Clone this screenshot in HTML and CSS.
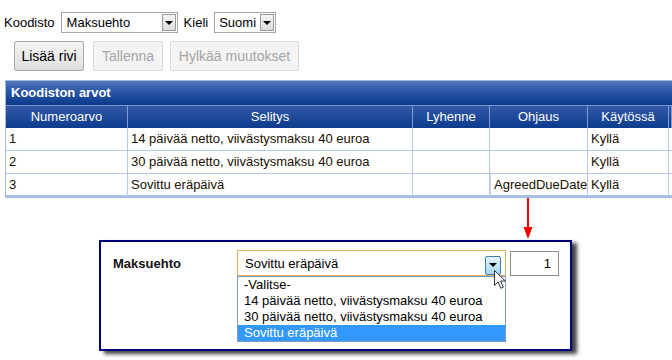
FILE: index.html
```html
<!DOCTYPE html>
<html lang="fi">
<head>
<meta charset="utf-8">
<title>Koodiston arvot</title>
<link rel="stylesheet" href="styles.css">
</head>
<body>
<div class="toolbar">
  <span class="lbl">Koodisto</span>
  <div class="sel sel-koodisto"><span class="sel-text">Maksuehto</span><span class="sel-btn"><i class="tri"></i></span></div>
  <span class="lbl">Kieli</span>
  <div class="sel sel-kieli"><span class="sel-text">Suomi</span><span class="sel-btn"><i class="tri"></i></span></div>
</div>
<div class="actions">
  <button class="btn btn-add">Lisää rivi</button>
  <button class="btn btn-save" disabled>Tallenna</button>
  <button class="btn btn-undo" disabled>Hylkää muutokset</button>
</div>
<div class="grid-panel">
  <div class="panel-title">Koodiston arvot</div>
  <div class="grid">
    <div class="th">Numeroarvo</div>
    <div class="th">Selitys</div>
    <div class="th">Lyhenne</div>
    <div class="th">Ohjaus</div>
    <div class="th">Käytössä</div>
    <div class="th"></div>

    <div class="td">1</div>
    <div class="td">14 päivää netto, viivästysmaksu 40 euroa</div>
    <div class="td"></div>
    <div class="td"></div>
    <div class="td">Kyllä</div>
    <div class="td"></div>

    <div class="td">2</div>
    <div class="td">30 päivää netto, viivästysmaksu 40 euroa</div>
    <div class="td"></div>
    <div class="td"></div>
    <div class="td">Kyllä</div>
    <div class="td"></div>

    <div class="td">3</div>
    <div class="td">Sovittu eräpäivä</div>
    <div class="td"></div>
    <div class="td td-edit">AgreedDueDate</div>
    <div class="td">Kyllä</div>
    <div class="td"></div>
  </div>
</div>
<div class="arrow-row">
  <svg class="arrow" width="10" height="42" viewBox="0 0 10 42">
    <rect x="4" y="0" width="2" height="31" fill="#ff0000"/>
    <polygon points="0.5,29 9.5,29 5,41" fill="#ff0000"/>
  </svg>
</div>
<div class="dialog">
  <span class="dlg-label">Maksuehto</span>
  <div class="combo">
    <span class="combo-text">Sovittu eräpäivä</span>
    <span class="combo-btn"><i class="tri"></i></span>
    <ul class="combo-list">
      <li>-Valitse-</li>
      <li>14 päivää netto, viivästysmaksu 40 euroa</li>
      <li>30 päivää netto, viivästysmaksu 40 euroa</li>
      <li class="selected">Sovittu eräpäivä</li>
    </ul>
    <svg class="cursor" width="14" height="21" viewBox="0 0 14 21">
      <path d="M1.5,1.5 L1.5,16.5 L5,13 L7.8,19.3 L10.3,18.2 L7.6,12 L12.3,12 Z" fill="#fafafa" stroke="#333" stroke-width="1" stroke-linejoin="round"/>
    </svg>
  </div>
  <div class="num-input">1</div>
</div>
</body>
</html>
```

FILE: styles.css
```css
html, body {
  margin: 0;
  padding: 0;
  background: #ffffff;
  overflow: hidden;
}
body {
  font-family: "Liberation Sans", Arial, sans-serif;
  font-size: 13px;
  color: #000;
  width: 672px;
  height: 360px;
}

/* top toolbar */
.toolbar {
  display: flex;
  align-items: center;
  margin-top: 12px;
  padding-left: 4px;
  height: 21px;
}
.lbl { margin-right: 6px; }
.sel {
  box-sizing: border-box;
  height: 21px;
  border: 1px solid #a6a6a6;
  background: #fff;
  display: flex;
  align-items: center;
  margin-right: 6px;
}
.sel-koodisto { width: 117px; }
.sel-kieli { width: 62px; }
.sel-text { padding-left: 5px; flex: 1; white-space: nowrap; }
.sel-kieli .sel-text { padding-left: 4px; }
.sel-btn {
  box-sizing: border-box;
  width: 14px;
  height: 17px;
  margin-right: 1px;
  border: 1px solid #9a9a9a;
  background: linear-gradient(#f6f6f6, #dcdcdc);
  display: flex;
  align-items: center;
  justify-content: center;
}
.tri {
  display: block;
  width: 0;
  height: 0;
  border-left: 4px solid transparent;
  border-right: 4px solid transparent;
  border-top: 4px solid #000;
}

/* action buttons */
.actions {
  display: flex;
  margin-top: 8px;
  padding-left: 14px;
  height: 30px;
}
.btn {
  box-sizing: border-box;
  height: 30px;
  padding: 0;
  font-family: "Liberation Sans", Arial, sans-serif;
  font-size: 14px;
  border-radius: 2px;
  border: 1px solid #a9a9a9;
  background: linear-gradient(#f4f4f4, #e0e0e0);
  color: #000;
}
.btn[disabled] {
  border-color: #d8d8d8;
  background: #f4f4f4;
  color: #a4a4a4;
}
.btn-add { width: 70px; }
.btn-save { width: 70px; margin-left: 9px; }
.btn-undo { width: 129px; margin-left: 7px; }

/* grid panel */
.grid-panel {
  box-sizing: border-box;
  margin-top: 9px;
  margin-left: 5px;
  width: 667px;
  overflow: hidden;
  border: 1px solid #a4bbe3;
  border-right: none;
}
.panel-title {
  height: 24px;
  line-height: 24px;
  padding-left: 5px;
  font-weight: bold;
  color: #fff;
  background: linear-gradient(#5175b9, #2a55a3 45%, #0a3a8d);
  border-bottom: 1px solid #7b98cf;
}
.grid {
  display: grid;
  grid-template-columns: 122px 285px 77px 98px 81px 3px;
}
.th {
  box-sizing: border-box;
  height: 22px;
  line-height: 22px;
  text-align: center;
  color: #fff;
  background: linear-gradient(#3159a6, #0d3b8d);
  border-right: 1px solid #7f9cd2;
}
.td {
  box-sizing: border-box;
  height: 23px;
  line-height: 22px;
  padding-left: 3px;
  white-space: nowrap;
  overflow: hidden;
  background: #fff;
  border-right: 1px solid #b6c8ea;
  border-bottom: 1px solid #b6c8ea;
  color: #1a1000;
}
.grid .td:nth-child(n+19) { border-bottom: 2px solid #a9bfe6; }
.td-edit {
  padding-left: 3px;
  border-left: 1px solid #c8d2e2;
}

/* arrow */
.arrow-row {
  height: 42px;
  padding-left: 523px;
}
.arrow { display: block; }

/* dialog */
.dialog {
  box-sizing: border-box;
  margin-left: 99px;
  width: 473px;
  height: 111px;
  border: 2px solid #00007f;
  background: #fff;
  box-shadow: 5px 3px 4px rgba(0, 0, 0, 0.75);
  display: flex;
  align-items: flex-start;
  padding: 8px 0 0 12px;
}
.dlg-label {
  width: 124px;
  font-weight: bold;
  line-height: 28px;
  color: #111;
}
.combo {
  position: relative;
  box-sizing: border-box;
  width: 269px;
  height: 26px;
  border: 1px solid #dcb25e;
  background: #fff;
  display: flex;
  align-items: center;
}
.combo-text { padding-left: 7px; flex: 1; }
.combo-btn {
  box-sizing: border-box;
  width: 16px;
  height: 19px;
  margin: 4px 4px 0 0;
  border: 1px solid #3c7fb1;
  border-radius: 2px;
  background: linear-gradient(#e5f4fd, #a7d6f6);
  display: flex;
  align-items: center;
  justify-content: center;
}
.combo-list {
  position: absolute;
  left: -1px;
  top: 25px;
  box-sizing: border-box;
  width: 269px;
  margin: 0;
  padding: 0;
  list-style: none;
  background: #fff;
  border: 1px solid #7f9db9;
}
.combo-list li {
  height: 16px;
  line-height: 16px;
  padding-left: 6px;
  white-space: nowrap;
}
.combo-list li.selected {
  background: #3399ff;
  color: #fff;
}
.cursor {
  position: absolute;
  left: 255px;
  top: 18px;
}
.num-input {
  box-sizing: border-box;
  margin-left: 4px;
  margin-top: 1px;
  width: 49px;
  height: 25px;
  line-height: 23px;
  border: 1px solid #8e8e8e;
  text-align: right;
  padding-right: 7px;
}
```
